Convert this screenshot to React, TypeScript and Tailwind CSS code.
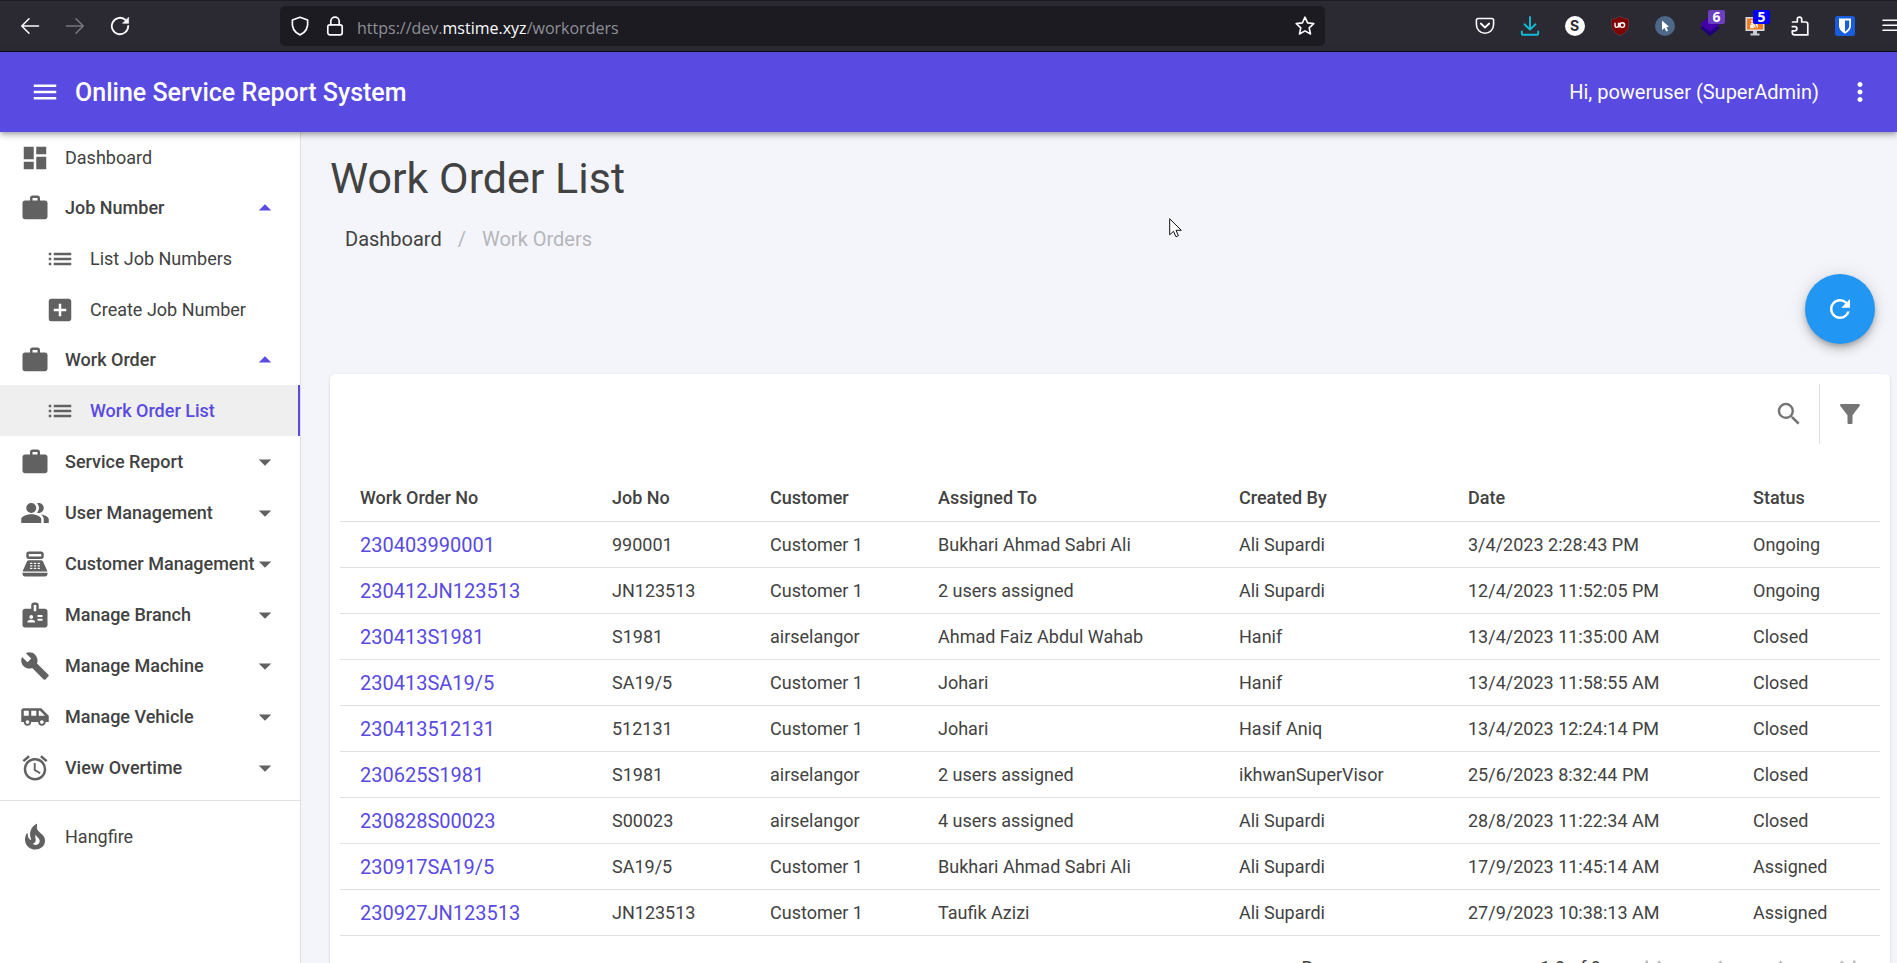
import type { ReactNode } from 'react';
import type { IconType } from 'react-icons';
import {
  MdAccessAlarm,
  MdAddBox,
  MdAirportShuttle,
  MdArrowDropDown,
  MdArrowDropUp,
  MdBadge,
  MdBuild,
  MdChevronLeft,
  MdChevronRight,
  MdDashboard,
  MdFilterAlt,
  MdFirstPage,
  MdLastPage,
  MdList,
  MdMenu,
  MdMoreVert,
  MdPeopleAlt,
  MdPointOfSale,
  MdRefresh,
  MdSearch,
  MdWork,
} from 'react-icons/md';

type Child = { label: string; icon: IconType; active?: boolean };
type Group = { label: string; icon: IconType; children?: Child[] };

const groups: Group[] = [
  {
    label: 'Job Number',
    icon: MdWork,
    children: [
      { label: 'List Job Numbers', icon: MdList },
      { label: 'Create Job Number', icon: MdAddBox },
    ],
  },
  { label: 'Work Order', icon: MdWork, children: [{ label: 'Work Order List', icon: MdList, active: true }] },
  { label: 'Service Report', icon: MdWork },
  { label: 'User Management', icon: MdPeopleAlt },
  { label: 'Customer Management', icon: MdPointOfSale },
  { label: 'Manage Branch', icon: MdBadge },
  { label: 'Manage Machine', icon: MdBuild },
  { label: 'Manage Vehicle', icon: MdAirportShuttle },
  { label: 'View Overtime', icon: MdAccessAlarm },
];

const columns = [
  { label: 'Work Order No', width: 'w-[252px]' },
  { label: 'Job No', width: 'w-[158px]' },
  { label: 'Customer', width: 'w-[168px]' },
  { label: 'Assigned To', width: 'w-[301px]' },
  { label: 'Created By', width: 'w-[229px]' },
  { label: 'Date', width: 'w-[285px]' },
  { label: 'Status', width: 'w-[147px]' },
];

const orders: string[][] = [
  ['230403990001', '990001', 'Customer 1', 'Bukhari Ahmad Sabri Ali', 'Ali Supardi', '3/4/2023 2:28:43 PM', 'Ongoing'],
  ['230412JN123513', 'JN123513', 'Customer 1', '2 users assigned', 'Ali Supardi', '12/4/2023 11:52:05 PM', 'Ongoing'],
  ['230413S1981', 'S1981', 'airselangor', 'Ahmad Faiz Abdul Wahab', 'Hanif', '13/4/2023 11:35:00 AM', 'Closed'],
  ['230413SA19/5', 'SA19/5', 'Customer 1', 'Johari', 'Hanif', '13/4/2023 11:58:55 AM', 'Closed'],
  ['230413512131', '512131', 'Customer 1', 'Johari', 'Hasif Aniq', '13/4/2023 12:24:14 PM', 'Closed'],
  ['230625S1981', 'S1981', 'airselangor', '2 users assigned', 'ikhwanSuperVisor', '25/6/2023 8:32:44 PM', 'Closed'],
  ['230828S00023', 'S00023', 'airselangor', '4 users assigned', 'Ali Supardi', '28/8/2023 11:22:34 AM', 'Closed'],
  ['230917SA19/5', 'SA19/5', 'Customer 1', 'Bukhari Ahmad Sabri Ali', 'Ali Supardi', '17/9/2023 11:45:14 AM', 'Assigned'],
  ['230927JN123513', 'JN123513', 'Customer 1', 'Taufik Azizi', 'Ali Supardi', '27/9/2023 10:38:13 AM', 'Assigned'],
];

function ToolButton({ label, children }: { label: string; children: ReactNode }) {
  return (
    <button type="button" aria-label={label} className="relative flex h-10 w-[45px] shrink-0 items-center justify-center text-[#fbfbfe]">
      {children}
    </button>
  );
}

const line = { fill: 'none', stroke: 'currentColor', strokeWidth: 1.6, strokeLinecap: 'round', strokeLinejoin: 'round' } as const;

function BrowserBar() {
  return (
    <div className="flex h-[52px] shrink-0 items-center border-t border-b border-t-[#1c1b22] border-b-[#0c0c0d] bg-[#2b2a33] pl-[7px]">
      <ToolButton label="Back">
        <svg width="20" height="20" viewBox="0 0 20 20" {...line}>
          <path d="M18.5 10H2M9 2.8L1.8 10 9 17.2" />
        </svg>
      </ToolButton>
      <ToolButton label="Forward">
        <svg width="20" height="20" viewBox="0 0 20 20" {...line} className="text-[#77767c]">
          <path d="M1.5 10H18M11 2.8L18.2 10 11 17.2" />
        </svg>
      </ToolButton>
      <ToolButton label="Reload">
        <svg width="20" height="20" viewBox="0 0 20 20" {...line} strokeWidth="1.8">
          <path d="M18.2 10A8.2 8.2 0 1 1 15 3.5L17 5.3" />
          <path d="M18.6 1.5V7.3H12.8Z" fill="currentColor" strokeWidth="0.6" />
        </svg>
      </ToolButton>

      <div className="ml-[138px] flex h-10 min-w-0 flex-1 items-center rounded-[5px] bg-[#1c1b22] px-2.5 text-[#fbfbfe]">
        <svg width="20" height="20" viewBox="0 0 20 20" {...line} strokeWidth="1.7">
          <path d="M10 1.2L17.6 4C18.5 11 15.5 16.5 10 18.9 4.500 16.5 1.5 11 2.400 4Z" />
        </svg>
        <svg width="20" height="20" viewBox="0 0 20 20" {...line} strokeWidth="1.7" className="ml-[15px]">
          <rect x="2.800" y="8.800" width="14.400" height="10" rx="2" />
          <path d="M5.800 8.800V5.300a4.200 4.200 0 0 1 8.400 0V8.800" />
        </svg>
        <p className="flex-1 pt-1 pl-3 font-['Open_Sans',sans-serif] text-base text-[#8f8f96]">
          https://dev.<span className="text-[#fbfbfe]">mstime.xyz</span>/workorders
        </p>
        <button type="button" aria-label="Bookmark this page">
          <svg width="20" height="20" viewBox="0 0 20 20" {...line}>
            <path d="M10 1.200L12.600 6.900 18.800 7.600 14.200 11.800 15.500 18 10 14.900 4.500 18 5.800 11.800 1.200 7.600 7.400 6.900Z" />
          </svg>
        </button>
      </div>

      <div className="flex w-[572px] shrink-0 justify-end">
        <ToolButton label="Pocket">
          <svg width="20" height="20" viewBox="0 0 20 20" {...line}>
            <path d="M3.200 2.500H16.800Q18.600 2.500 18.600 4.300V8.500A8.600 8.800 0 0 1 1.400 8.500V4.300Q1.400 2.500 3.200 2.500Z" />
            <path d="M5.800 7.500L10 11.500 14.200 7.500" strokeWidth="1.800" />
          </svg>
        </ToolButton>
        <ToolButton label="Downloads">
          <svg width="20" height="20" viewBox="0 0 20 20" {...line} strokeWidth="1.900" className="text-[#10bcd6]">
            <path d="M10 1V13.500M4.500 8.300L10 13.600 15.500 8.300M1.800 15.500V17.200Q1.800 18.800 3.400 18.800H16.600Q18.200 18.800 18.200 17.200V15.500" />
          </svg>
        </ToolButton>
        <ToolButton label="Extension S">
          <span className="flex size-5 items-center justify-center rounded-full bg-white font-['Inter',sans-serif] text-sm font-bold text-[#2b2a33]">S</span>
        </ToolButton>
        <ToolButton label="Ad blocker">
          <svg width="20" height="20" viewBox="0 0 20 20">
            <path d="M10 0.500Q14 3 18.500 3V10Q18 16 10 19.500 2 16 1.500 10V3Q6 3 10 0.500Z" fill="#800000" stroke="#5d5560" strokeWidth="0.500" />
            <path d="M5 6.800V9.600Q5 11.400 6.700 11.400 8.500 11.400 8.500 9.600V6.800" fill="none" stroke="#fff" strokeWidth="1.400" />
            <circle cx="12.300" cy="9.100" r="2.300" fill="none" stroke="#fff" strokeWidth="1.400" />
            <path d="M9.300 6.800V11.500" stroke="#fff" strokeWidth="1" />
          </svg>
        </ToolButton>
        <ToolButton label="Pointer extension">
          <svg width="20" height="20" viewBox="0 0 20 20">
            <circle cx="10" cy="10" r="10" fill="#4d6788" />
            <path d="M7 4.500L14 10.800 11.300 11.200 13 14.800 11.300 15.600 9.600 12 7 14Z" fill="#fff" />
          </svg>
        </ToolButton>
        <ToolButton label="Layers extension, 6">
          <svg width="20" height="20" viewBox="0 0 20 20">
            <path d="M0 12L10 5 20 12 10 20Z" fill="#1f007a" />
            <path d="M0 8L10 0 20 8 10 15.500Z" fill="#4400a8" />
          </svg>
          <span className="absolute top-1 right-[7px] flex h-3.5 w-[17px] items-center justify-center rounded-xs bg-[#6a3fc0] font-['Open_Sans',sans-serif] text-sm font-bold text-white">6</span>
        </ToolButton>
        <ToolButton label="Feed extension, 5">
          <svg width="20" height="20" viewBox="0 0 20 20">
            <rect x="0.500" y="1" width="19" height="14" fill="#d9dde0" />
            <rect x="2" y="2.500" width="16" height="11" fill="#f37a1f" />
            <path d="M6 11.500h2v-2H6ZM6 7.500a4 4 0 0 1 4 4M6 5a7 7 0 0 1 6.500 6.500" fill="none" stroke="#fff" strokeWidth="1.400" />
            <path d="M8 15h4v2.500h2.500V19.500h-9V17.500H8Z" fill="#c9cdd2" />
          </svg>
          <span className="absolute top-1 right-[7px] flex h-3.5 w-[17px] items-center justify-center rounded-xs bg-[#0000ff] font-['Open_Sans',sans-serif] text-sm font-bold text-white">5</span>
        </ToolButton>
        <ToolButton label="Extensions">
          <svg width="20" height="20" viewBox="0 0 20 20" {...line} strokeWidth="1.700">
            <path d="M2.500 6H7.300V3.300a2.200 2.200 0 0 1 4.400 0V6H15.500Q17.800 6 17.800 8.300V18.900H4.500Q2.300 18.900 2.300 16.700V14.800H4.800a2.100 2.100 0 0 0 0-4.200H2.300" />
          </svg>
        </ToolButton>
        <ToolButton label="Password manager">
          <svg width="20" height="20" viewBox="0 0 20 20">
            <rect width="20" height="20" rx="2.500" fill="#175ddc" />
            <path d="M4 2.500H16V10Q16 14.500 10 17.800 4 14.500 4 10Z" fill="#fff" />
            <path d="M10 4.500H14.200V10Q14 13 10 15.600Z" fill="#175ddc" />
          </svg>
        </ToolButton>
        <div className="flex w-[30px] shrink-0 justify-end overflow-hidden">
          <button type="button" aria-label="Application menu" className="-mr-[5px] text-[#fbfbfe]">
            <svg width="20" height="20" viewBox="0 0 20 20" {...line}>
              <path d="M1 4.300H19M1 9.300H19M1 14.300H19" />
            </svg>
          </button>
        </div>
      </div>
    </div>
  );
}

function AppBar() {
  return (
    <header className="z-10 flex h-20 shrink-0 items-center bg-[#594ae2] px-[30px] text-white shadow-[0_2px_4px_-1px_rgba(0,0,0,0.2),0_4px_5px_rgba(0,0,0,0.14),0_1px_10px_rgba(0,0,0,0.12)]">
      <button type="button" aria-label="Toggle navigation">
        <MdMenu size={30} />
      </button>
      <p className="pt-0.5 pl-[15px] text-[25px] font-medium">Online Service Report System</p>
      <p className="ml-auto text-xl">Hi, poweruser (SuperAdmin)</p>
      <button type="button" aria-label="More options" className="-mr-2 ml-[26px]">
        <MdMoreVert size={30} />
      </button>
    </header>
  );
}

function FlameIcon() {
  return (
    <svg width="30" height="30" viewBox="0 0 24 24" fill="currentColor" className="text-[#616161]">
      <path d="M19.480 12.350c-1.570-4.080-7.160-4.300-5.810-10.230.1-.44-.37-.78-.75-.55C9.290 3.710 6.680 8 8.870 13.620c.18.46-.36.89-.75.59-1.810-1.370-2-3.340-1.840-4.750.06-.52-.62-.77-.91-.34C4.690 10.160 4 11.840 4 14.370c.38 5.600 5.110 7.320 6.810 7.540 2.430.31 5.060-.14 6.950-1.870 2.080-1.930 2.840-5.010 1.720-7.690zm-9.280 5.030c1.440-.35 2.180-1.390 2.380-2.310.33-1.430-.96-2.830-.09-5.090.33 1.870 3.270 3.040 3.270 5.080.08 2.530-2.660 4.700-5.560 2.320z" />
    </svg>
  );
}

function Sidebar() {
  return (
    <nav className="w-[301px] shrink-0 border-r border-[#dddde2] bg-white text-lg">
      <a href="#dashboard" className="flex h-[51px] items-center gap-[15px] px-5">
        <MdDashboard size={30} className="text-[#616161]" />
        Dashboard
      </a>
      {groups.map(({ label, icon: Icon, children }) => (
        <div key={label}>
          <button
            type="button"
            aria-expanded={!!children}
            className={`flex w-full items-center gap-[15px] px-5 font-medium ${children ? 'h-[50px]' : 'h-[51px]'}`}
          >
            <Icon size={30} className="shrink-0 text-[#616161]" />
            <span className="-mr-5 flex-1 text-left whitespace-nowrap">{label}</span>
            {children ? <MdArrowDropUp size={30} className="text-[#594ae2]" /> : <MdArrowDropDown size={30} className="text-[#616161]" />}
          </button>
          {children?.map(({ label: text, icon: ChildIcon, active }) => (
            <a
              key={text}
              href="#list"
              className={`flex h-[51px] items-center gap-[15px] pl-[45px] ${active ? 'border-r-2 border-[#594ae2] bg-[#efefef] font-medium text-[#594ae2]' : ''}`}
            >
              <ChildIcon size={30} className="text-[#616161]" />
              {text}
            </a>
          ))}
        </div>
      ))}
      <hr className="mt-[7px] mb-[11px] border-[#e0e0e0]" />
      <a href="#hangfire" className="flex h-[50px] items-center gap-[15px] px-5">
        <FlameIcon />
        Hangfire
      </a>
    </nav>
  );
}

function OrdersTable() {
  return (
    <table className="w-full table-fixed border-collapse text-lg">
      <thead>
        <tr className="h-[77px] border-b border-[#e0e0e0]">
          {columns.map((c) => (
            <th key={c.label} className={`${c.width} pt-8 pl-5 text-left font-medium`}>
              {c.label}
            </th>
          ))}
        </tr>
      </thead>
      <tbody>
        {orders.map((row) => (
          <tr key={row[0]} className="h-[46px] border-b border-[#e0e0e0]">
            {row.map((cell, i) => (
              <td key={i} className="pt-0.5 pl-5 whitespace-nowrap">
                {i === 0 ? (
                  <a href="#order" className="text-xl text-[#594ae2]">
                    {cell}
                  </a>
                ) : (
                  cell
                )}
              </td>
            ))}
          </tr>
        ))}
      </tbody>
    </table>
  );
}

function Pager() {
  return (
    <div className="flex h-[65px] items-center justify-end pr-0.5">
      <label htmlFor="page-size">Rows per page:</label>
      <select id="page-size" defaultValue="10" className="mt-4 mr-10 ml-5 w-14">
        <option>10</option>
        <option>25</option>
      </select>
      <p>1-9 of 9</p>
      <div className="ml-[22px] flex gap-[5px] text-[#bdbdbd]">
        {[MdFirstPage, MdChevronLeft, MdChevronRight, MdLastPage].map((Icon, i) => (
          <button key={i} type="button" disabled aria-label={['First page', 'Previous page', 'Next page', 'Last page'][i]} className="flex size-[60px] items-center justify-center">
            <Icon size={30} />
          </button>
        ))}
      </div>
    </div>
  );
}

export default function App() {
  return (
    <div className="flex h-screen flex-col overflow-hidden bg-[#f4f5fa] font-['Roboto',sans-serif] text-[#424242]">
      <BrowserBar />
      <AppBar />
      <div className="flex min-h-0 flex-1">
        <Sidebar />
        <main className="relative min-w-0 flex-1 overflow-hidden pr-[7px] pl-[29px]">
          <h1 className="pt-5 text-[43px] leading-[52px]">Work Order List</h1>
          <ol className="mt-5 flex gap-4 px-[15px] text-xl leading-[30px]">
            <li>
              <a href="#dashboard">Dashboard</a>
            </li>
            <li aria-hidden="true" className="text-[#b5b5ba]">
              /
            </li>
            <li className="text-[#b5b5ba]">Work Orders</li>
          </ol>
          <div className="mt-5 flex justify-end pr-[15px]">
            <button
              type="button"
              aria-label="Refresh"
              className="flex size-[70px] items-center justify-center rounded-full bg-[#2196f3] text-white shadow-[0_3px_5px_-1px_rgba(0,0,0,0.2),0_6px_10px_rgba(0,0,0,0.14),0_1px_18px_rgba(0,0,0,0.12)]"
            >
              <MdRefresh size={30} />
            </button>
          </div>
          <section className="mt-[30px] rounded-[5px] bg-white p-2.5 text-lg shadow-[0_2px_1px_-1px_rgba(0,0,0,0.2),0_1px_1px_rgba(0,0,0,0.14),0_1px_3px_rgba(0,0,0,0.12)]">
            <div className="flex h-[60px] justify-end text-[#757575]">
              <button type="button" aria-label="Search" className="flex w-[62px] items-center justify-center border-r border-[#e0e0e0]">
                <MdSearch size={30} />
              </button>
              <button type="button" aria-label="Filter" className="flex w-[60px] items-center justify-center">
                <MdFilterAlt size={30} />
              </button>
            </div>
            <OrdersTable />
            <Pager />
          </section>
          <svg width="14" height="20" viewBox="0 0 14 20" className="absolute top-[86px] left-[868px]">
            <path d="M0.700 0.800V16.800L4.500 13.300 7 18.800 9.400 17.700 7 12.300H12.300Z" fill="#fff" stroke="#111" strokeWidth="1" />
          </svg>
        </main>
      </div>
    </div>
  );
}
